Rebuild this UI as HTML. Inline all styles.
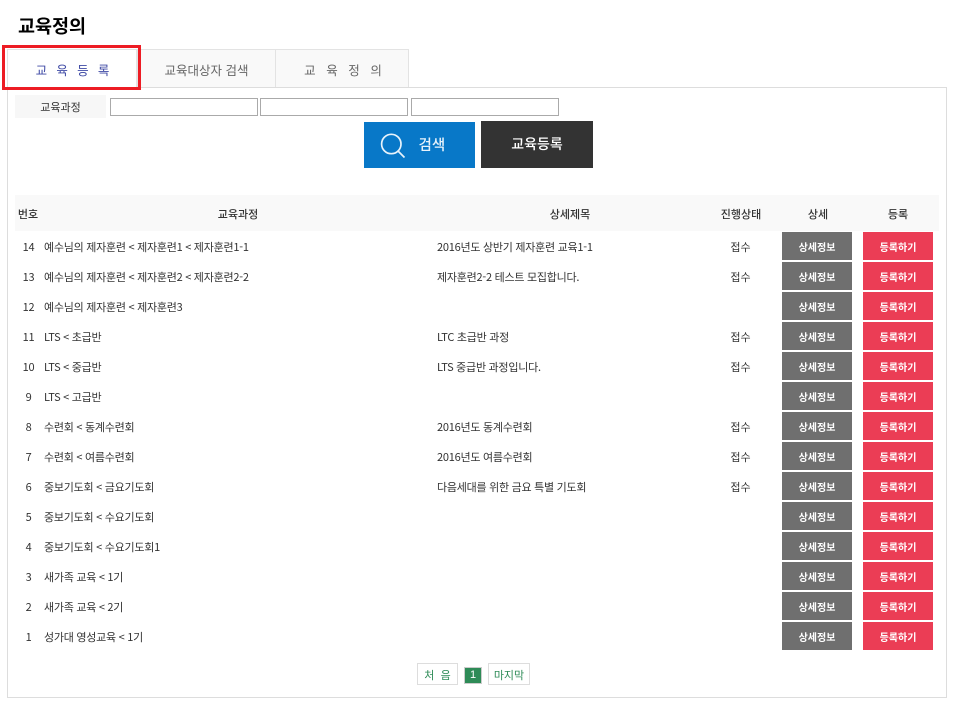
<!DOCTYPE html>
<html lang="ko"><head><meta charset="utf-8"><title>교육정의</title>
<style>
*{box-sizing:border-box;margin:0;padding:0}
html,body{width:958px;height:710px;background:#fff;overflow:hidden}
body{position:relative;font-family:"Noto Sans CJK KR","Liberation Sans",sans-serif;font-size:11px;color:#333}
.a{position:absolute;white-space:nowrap}
.c{text-align:center}
.tab{position:absolute;top:49px;height:38px;background:#f9f9f9;border:1px solid #e3e3e3;border-bottom:0;text-align:center;line-height:39px;font-size:12.5px;color:#666;white-space:pre}
.in{position:absolute;top:98px;height:18px;border:1px solid #aaa;background:#fff}
.r{position:absolute;left:0;width:958px;height:30px;line-height:28px}
.r span{position:absolute;white-space:nowrap;top:1px;letter-spacing:-.23px;word-spacing:-.15px}
.r span.n{left:15px;width:27px;text-align:center}
.t{left:44px}
.d{left:437px}
.r span.s{left:720px;width:41px;text-align:center;letter-spacing:0}
.r b{position:absolute;top:0;width:70px;height:28px;line-height:29px;text-align:center;color:#fff;font-size:10px;font-weight:700}
.g{left:782px;background:#6f6f6f}
.p{left:863px;background:#eb3d55}
.h{position:absolute;top:195px;left:15px;width:924px;height:36px;background:#f9f9f9}
.th{position:absolute;top:195px;height:36px;line-height:39px;text-align:center;font-weight:500;white-space:nowrap}
.pg{position:absolute;top:663px;height:22px;line-height:23px;border:1px solid #ddd;text-align:center;color:#2e8b57;font-size:11px;white-space:pre}
</style></head><body>
<div class="a" style="left:18px;top:12px;font-size:18.5px;font-weight:700;color:#000;line-height:28px">교육정의</div>

<div class="a" style="left:7px;top:87px;width:940px;height:611px;border:1px solid #ddd"></div>
<div class="tab" style="left:7px;width:130px;height:41px;background:#fff;color:#3f4aa5;word-spacing:-.41px;padding-left:1px">교   육   등   록</div>
<div class="tab" style="left:137px;width:139px">교육대상자 검색</div>
<div class="tab" style="left:275px;width:134px;word-spacing:.03px;padding-left:2px">교   육   정   의</div>
<div class="a" style="left:2px;top:45px;width:139px;height:45px;border:3px solid #ed1c24"></div>

<div class="a c" style="left:15px;top:95px;width:91px;height:23px;line-height:24px;background:#f7f7f7">교육과정</div>
<div class="in" style="left:110px;width:148px"></div>
<div class="in" style="left:260px;width:148px"></div>
<div class="in" style="left:411px;width:148px"></div>

<div class="a" style="left:364px;top:122px;width:111px;height:46px;background:#0878c8"></div>
<svg class="a" style="left:380px;top:132px" width="26" height="26" viewBox="0 0 26 26" fill="none" stroke="#e8f3fb" stroke-width="1.7"><circle cx="11.3" cy="12" r="9.7"/><path d="M18 19l6.5 6.5"/></svg>
<div class="a" style="left:418.5px;top:133px;font-size:14.5px;font-weight:500;color:#e8f3fb;line-height:24px">검색</div>
<div class="a c" style="left:481px;top:121px;width:112px;height:47px;line-height:47px;background:#333;color:#fff;font-size:14px;font-weight:500">교육등록</div>

<div class="h"></div>
<div class="th" style="left:15px;width:26px">번호</div>
<div class="th" style="left:208px;width:60px">교육과정</div>
<div class="th" style="left:540px;width:60px">상세제목</div>
<div class="th" style="left:711px;width:60px">진행상태</div>
<div class="th" style="left:788px;width:60px">상세</div>
<div class="th" style="left:868px;width:60px">등록</div>

<div class="r" style="top:232px"><span class="n">14</span><span class="t">예수님의 제자훈련 &lt; 제자훈련1 &lt; 제자훈련1-1</span><span class="d">2016년도 상반기 제자훈련 교육1-1</span><span class="s">접수</span><b class="g">상세정보</b><b class="p">등록하기</b></div>
<div class="r" style="top:262px"><span class="n">13</span><span class="t">예수님의 제자훈련 &lt; 제자훈련2 &lt; 제자훈련2-2</span><span class="d">제자훈련2-2 테스트 모집합니다.</span><span class="s">접수</span><b class="g">상세정보</b><b class="p">등록하기</b></div>
<div class="r" style="top:292px"><span class="n">12</span><span class="t">예수님의 제자훈련 &lt; 제자훈련3</span><b class="g">상세정보</b><b class="p">등록하기</b></div>
<div class="r" style="top:322px"><span class="n">11</span><span class="t">LTS &lt; 초급반</span><span class="d">LTC 초급반 과정</span><span class="s">접수</span><b class="g">상세정보</b><b class="p">등록하기</b></div>
<div class="r" style="top:352px"><span class="n">10</span><span class="t">LTS &lt; 중급반</span><span class="d">LTS 중급반 과정입니다.</span><span class="s">접수</span><b class="g">상세정보</b><b class="p">등록하기</b></div>
<div class="r" style="top:382px"><span class="n">9</span><span class="t">LTS &lt; 고급반</span><b class="g">상세정보</b><b class="p">등록하기</b></div>
<div class="r" style="top:412px"><span class="n">8</span><span class="t">수련회 &lt; 동계수련회</span><span class="d">2016년도 동계수련회</span><span class="s">접수</span><b class="g">상세정보</b><b class="p">등록하기</b></div>
<div class="r" style="top:442px"><span class="n">7</span><span class="t">수련회 &lt; 여름수련회</span><span class="d">2016년도 여름수련회</span><span class="s">접수</span><b class="g">상세정보</b><b class="p">등록하기</b></div>
<div class="r" style="top:472px"><span class="n">6</span><span class="t">중보기도회 &lt; 금요기도회</span><span class="d">다음세대를 위한 금요 특별 기도회</span><span class="s">접수</span><b class="g">상세정보</b><b class="p">등록하기</b></div>
<div class="r" style="top:502px"><span class="n">5</span><span class="t">중보기도회 &lt; 수요기도회</span><b class="g">상세정보</b><b class="p">등록하기</b></div>
<div class="r" style="top:532px"><span class="n">4</span><span class="t">중보기도회 &lt; 수요기도회1</span><b class="g">상세정보</b><b class="p">등록하기</b></div>
<div class="r" style="top:562px"><span class="n">3</span><span class="t">새가족 교육 &lt; 1기</span><b class="g">상세정보</b><b class="p">등록하기</b></div>
<div class="r" style="top:592px"><span class="n">2</span><span class="t">새가족 교육 &lt; 2기</span><b class="g">상세정보</b><b class="p">등록하기</b></div>
<div class="r" style="top:622px"><span class="n">1</span><span class="t">성가대 영성교육 &lt; 1기</span><b class="g">상세정보</b><b class="p">등록하기</b></div>

<div class="pg" style="left:417px;width:41px">처  음</div>
<div class="a c" style="left:464px;top:667px;width:18px;height:17px;line-height:15px;background:#2e8b57;border:1px solid #ccc;color:#fff;font-size:11px;font-family:'Liberation Sans',sans-serif">1</div>
<div class="pg" style="left:488px;width:42px">마지막</div>
</body></html>
